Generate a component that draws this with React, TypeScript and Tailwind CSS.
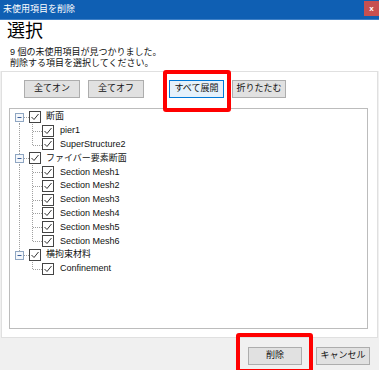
const JP = "font-['Liberation_Sans','Noto_Sans_CJK_JP',sans-serif]";

type Node = { label: string; children?: string[] };

const tree: Node[] = [
  { label: "断面", children: ["pier1", "SuperStructure2"] },
  {
    label: "ファイバー要素断面",
    children: ["Section Mesh1", "Section Mesh2", "Section Mesh3", "Section Mesh4", "Section Mesh5", "Section Mesh6"],
  },
  { label: "横拘束材料", children: ["Confinement"] },
];

const dot = { stroke: "#a0a0a0", strokeWidth: 1, strokeDasharray: "1 1" };

function Check() {
  return (
    <svg width="12" height="12" viewBox="0 0 12 12" className="shrink-0">
      <rect x="0.5" y="0.5" width="11" height="11" fill="#fff" stroke="#444" />
      <path d="M2.5 6 L5 8.5 L9.5 3" fill="none" stroke="#333" strokeWidth="1" />
    </svg>
  );
}

function RootRow({ label, first, last }: { label: string; first: boolean; last: boolean }) {
  return (
    <div className="flex h-[13.8px] items-center">
      <svg width="19" height="14" className="shrink-0 overflow-visible">
        {!first && <line x1="9.5" y1="0" x2="9.5" y2="3" {...dot} />}
        {!last && <line x1="9.5" y1="11" x2="9.5" y2="14" {...dot} />}
        <line x1="14" y1="7.5" x2="19" y2="7.5" {...dot} />
        <rect x="5.5" y="3.5" width="8" height="8" fill="#f4f7fb" stroke="#8fa6c2" />
        <line x1="7.5" y1="7.5" x2="11.5" y2="7.5" stroke="#3a5f9a" strokeWidth="1" />
      </svg>
      <Check />
      <span className="ml-[5px] text-[9px] leading-none text-[#111] whitespace-nowrap">{label}</span>
    </div>
  );
}

function ChildRow({ label, last, rootLine }: { label: string; last: boolean; rootLine: boolean }) {
  return (
    <div className="flex h-[13.8px] items-center">
      <svg width="32" height="14" className="shrink-0 overflow-visible">
        {rootLine && <line x1="9.5" y1="0" x2="9.5" y2="14" {...dot} />}
        <line x1="22.5" y1="0" x2="22.5" y2={last ? 7.5 : 14} {...dot} />
        <line x1="23" y1="7.5" x2="32" y2="7.5" {...dot} />
      </svg>
      <Check />
      <span className="ml-[6px] text-[9px] leading-none text-[#111] whitespace-nowrap">{label}</span>
    </div>
  );
}

function Btn({ children, w, active }: { children: React.ReactNode; w: string; active?: boolean }) {
  return (
    <div
      className={`flex h-[18px] items-center justify-center border text-[9px] text-[#111] ${w} ${
        active ? "border-[#0078d7] bg-[#e5f1fb]" : "border-[#adadad] bg-[#e1e1e1]"
      }`}
    >
      {children}
    </div>
  );
}

export default function App() {
  return (
    <div className={`relative flex h-[370px] w-[379px] flex-col overflow-hidden bg-[#f0f0f0] ${JP}`}>
      <div className="flex h-[20px] shrink-0 items-center justify-between border-b border-[#3f80c6] bg-[#0f5fb3] pl-[3px]">
        <span className="text-[9px] leading-none text-white">未使用項目を削除</span>
        <div className="mb-[2px] flex h-[15px] w-[15px] items-center justify-center bg-[#c75050] text-[8px] font-bold leading-none text-white">
          x
        </div>
      </div>

      <div className="h-[51px] shrink-0 bg-white">
        <div className="pl-[7px] pt-[1px] text-[18px] leading-[20px] text-black">選択</div>
        <div className="pl-[10px] pt-[6px] text-[9px] leading-[11px] text-[#111]">
          <div>9 個の未使用項目が見つかりました。</div>
          <div>削除する項目を選択してください。</div>
        </div>
      </div>

      <div className="mx-[1px] flex h-[267px] shrink-0 flex-col border border-[#e0e0e0] bg-white">
        <div className="flex pl-[22px] pt-[8px]">
          <Btn w="w-[56px]">全てオン</Btn>
          <div className="ml-[8px]">
            <Btn w="w-[56px]">全てオフ</Btn>
          </div>
          <div className="relative ml-[25px]">
            <Btn w="w-[55px]" active>
              すべて展開
            </Btn>
            <div className="absolute -bottom-[14px] -left-[6px] -right-[7px] -top-[10px] rounded-[3px] border-[4px] border-[#ff0000]" />
          </div>
          <div className="ml-[8px]">
            <Btn w="w-[54px]">折りたたむ</Btn>
          </div>
        </div>

        <div className="ml-[7px] mt-[10px] h-[221px] w-[359px] border border-[#bcbcbc] bg-white pt-[1px]">
          {tree.map((n, i) => (
            <div key={n.label}>
              <RootRow label={n.label} first={i === 0} last={i === tree.length - 1} />
              {n.children?.map((c, j) => (
                <ChildRow
                  key={c}
                  label={c}
                  last={j === (n.children?.length ?? 0) - 1}
                  rootLine={i !== tree.length - 1}
                />
              ))}
            </div>
          ))}
        </div>
      </div>

      <div className="flex justify-end gap-[14px] pr-[9px] pt-[9px]">
        <div className="relative">
          <Btn w="w-[54px]">削除</Btn>
          <div className="absolute -bottom-[8px] -left-[12px] -right-[11px] -top-[14px] rounded-[3px] border-[4px] border-[#ff0000]" />
        </div>
        <Btn w="w-[54px]">キャンセル</Btn>
      </div>
    </div>
  );
}
